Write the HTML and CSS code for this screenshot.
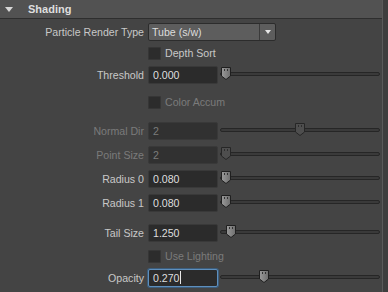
FILE: index.html
```html
<!DOCTYPE html>
<html lang="en">
<head>
    <meta charset="UTF-8">
    <title>Shading</title>
    <link rel="stylesheet" href="styles.css">
</head>
<body>
    <div class="frame">
        <div class="panel">
            <div class="frame-header">
                <span class="arrow"></span>
                <span class="frame-title">Shading</span>
            </div>

            <div class="row r-type">
                <label class="lbl">Particle Render Type</label>
                <div class="dropdown">
                    <span class="dd-text">Tube (s/w)</span>
                    <span class="dd-btn"><span class="dd-arrow"></span></span>
                </div>
            </div>

            <div class="row r-depth">
                <span class="lbl"></span>
                <span class="check"></span>
                <span class="check-text">Depth Sort</span>
            </div>

            <div class="row r-threshold">
                <label class="lbl">Threshold</label>
                <div class="field">0.000</div>
                <div class="slider">
                    <div class="track"></div>
                    <svg class="thumb" style="left: 0px" width="12" height="15" viewBox="0 0 12 15"><use href="#thumb"/></svg>
                </div>
            </div>

            <div class="row r-accum disabled">
                <span class="lbl"></span>
                <span class="check"></span>
                <span class="check-text">Color Accum</span>
            </div>

            <div class="row r-normal disabled">
                <label class="lbl">Normal Dir</label>
                <div class="field">2</div>
                <div class="slider">
                    <div class="track"></div>
                    <svg class="thumb off" style="left: 74px" width="12" height="15" viewBox="0 0 12 15"><use href="#thumb-off"/></svg>
                </div>
            </div>

            <div class="row r-small disabled">
                <label class="lbl">Point Size</label>
                <div class="field">2</div>
                <div class="slider">
                    <div class="track"></div>
                    <svg class="thumb off" style="left: 0px" width="12" height="15" viewBox="0 0 12 15"><use href="#thumb-off"/></svg>
                </div>
            </div>

            <div class="row r-small">
                <label class="lbl">Radius 0</label>
                <div class="field">0.080</div>
                <div class="slider">
                    <div class="track"></div>
                    <svg class="thumb" style="left: 0px" width="12" height="15" viewBox="0 0 12 15"><use href="#thumb"/></svg>
                </div>
            </div>

            <div class="row r-small">
                <label class="lbl">Radius 1</label>
                <div class="field">0.080</div>
                <div class="slider">
                    <div class="track"></div>
                    <svg class="thumb" style="left: 0px" width="12" height="15" viewBox="0 0 12 15"><use href="#thumb"/></svg>
                </div>
            </div>

            <div class="row r-tail">
                <label class="lbl">Tail Size</label>
                <div class="field">1.250</div>
                <div class="slider">
                    <div class="track"></div>
                    <svg class="thumb" style="left: 5px" width="12" height="15" viewBox="0 0 12 15"><use href="#thumb"/></svg>
                </div>
            </div>

            <div class="row r-light disabled">
                <span class="lbl"></span>
                <span class="check"></span>
                <span class="check-text">Use Lighting</span>
            </div>

            <div class="row r-opacity">
                <label class="lbl">Opacity</label>
                <div class="field focus">0.270<span class="caret"></span></div>
                <div class="slider">
                    <div class="track"></div>
                    <svg class="thumb" style="left: 38px" width="12" height="15" viewBox="0 0 12 15"><use href="#thumb"/></svg>
                </div>
            </div>
        </div>
        <div class="gutter"></div>
    </div>

    <svg width="0" height="0" class="defs">
        <defs>
            <linearGradient id="tg" x1="0" y1="0" x2="1" y2="0">
                <stop offset="0" stop-color="#9a9a9a"/>
                <stop offset="1" stop-color="#6e6e6e"/>
            </linearGradient>
            <g id="thumb">
                <path d="M1.5 1.5 H10.5 V10 L6 13.5 L1.5 10 Z" fill="url(#tg)" stroke="#1f1f1f"/>
                <rect x="4" y="3" width="1" height="2" fill="#333"/>
                <rect x="7" y="3" width="1" height="2" fill="#333"/>
            </g>
            <g id="thumb-off">
                <path d="M1.5 1.5 H10.5 V10 L6 13.5 L1.5 10 Z" fill="#4e4e4e" stroke="#262626"/>
                <rect x="4" y="3" width="1" height="2" fill="#2e2e2e"/>
                <rect x="7" y="3" width="1" height="2" fill="#2e2e2e"/>
            </g>
        </defs>
    </svg>
</body>
</html>
```

FILE: styles.css
```css
body {
    margin: 0;
    padding: 0;
    background-color: #444444;
    font-family: "Liberation Sans", Arial, sans-serif;
    font-size: 10.6px;
    color: #c8c8c8;
}

.frame {
    display: flex;
    width: 388px;
    height: 292px;
    overflow: hidden;
}

.panel {
    width: 382px;
    border-right: 1px solid #5a5a5a;
}

.gutter {
    flex: 1;
    background-color: #3e3e3e;
}

.frame-header {
    display: flex;
    align-items: center;
    height: 19px;
    background-color: #525252;
    border-bottom: 1px solid #2e2e2e;
    box-sizing: border-box;
}

.arrow {
    width: 0;
    height: 0;
    margin-left: 5px;
    border-left: 4px solid transparent;
    border-right: 4px solid transparent;
    border-top: 5px solid #d8d8d8;
}

.frame-title {
    margin-left: 15px;
    font-size: 11px;
    font-weight: bold;
    color: #dedede;
}

.row {
    display: flex;
    align-items: center;
    height: 18px;
}

.r-type { margin-top: 4px; }
.r-depth { margin-top: 3px; }
.r-threshold { margin-top: 4px; }
.r-accum { margin-top: 9px; }
.r-normal { margin-top: 11px; }
.r-small { margin-top: 6px; }
.r-tail { margin-top: 12px; }
.r-light { margin-top: 5px; }
.r-opacity { margin-top: 4px; }

.lbl {
    width: 144px;
    flex-shrink: 0;
    text-align: right;
    margin-right: 4px;
    white-space: nowrap;
}

.disabled .lbl,
.disabled .check-text,
.disabled .field {
    color: #7b7b7b;
}

.dropdown {
    display: flex;
    width: 128px;
    height: 18px;
    box-sizing: border-box;
    background-color: #5d5d5d;
    border: 1px solid #2c2c2c;
    border-radius: 2px;
    color: #dcdcdc;
}

.dd-text {
    flex: 1;
    padding-left: 3px;
    line-height: 16px;
}

.dd-btn {
    display: flex;
    align-items: center;
    justify-content: center;
    width: 15px;
    border-left: 1px solid #3a3a3a;
}

.dd-arrow {
    width: 0;
    height: 0;
    border-left: 3px solid transparent;
    border-right: 3px solid transparent;
    border-top: 4px solid #e6e6e6;
}

.check {
    width: 13px;
    height: 13px;
    box-sizing: border-box;
    background-color: #2c2c2c;
    border: 1px solid #363636;
    border-radius: 1px;
}

.check-text {
    margin-left: 4px;
}

.field {
    width: 70px;
    height: 18px;
    flex-shrink: 0;
    box-sizing: border-box;
    padding-left: 4px;
    line-height: 16px;
    background-color: #2b2b2b;
    border: 1px solid #393939;
    border-radius: 2px;
    color: #dedede;
}

.disabled .field {
    background-color: #313131;
}

.field.focus {
    border-color: #5e8fbd;
    box-shadow: 0 0 0 1px #3c5d7c;
}

.caret {
    display: inline-block;
    width: 1px;
    height: 13px;
    vertical-align: -2px;
    background-color: #e8e8e8;
}

.slider {
    position: relative;
    flex: 1;
    height: 18px;
    margin-left: 2px;
    margin-right: 2px;
}

.track {
    position: absolute;
    left: 0;
    right: 0;
    top: 6px;
    height: 4px;
    box-sizing: border-box;
    background-color: #3a3a3a;
    border: 1px solid #262626;
    border-radius: 2px;
}

.thumb {
    position: absolute;
    top: 0;
}

.defs {
    position: absolute;
}
```
